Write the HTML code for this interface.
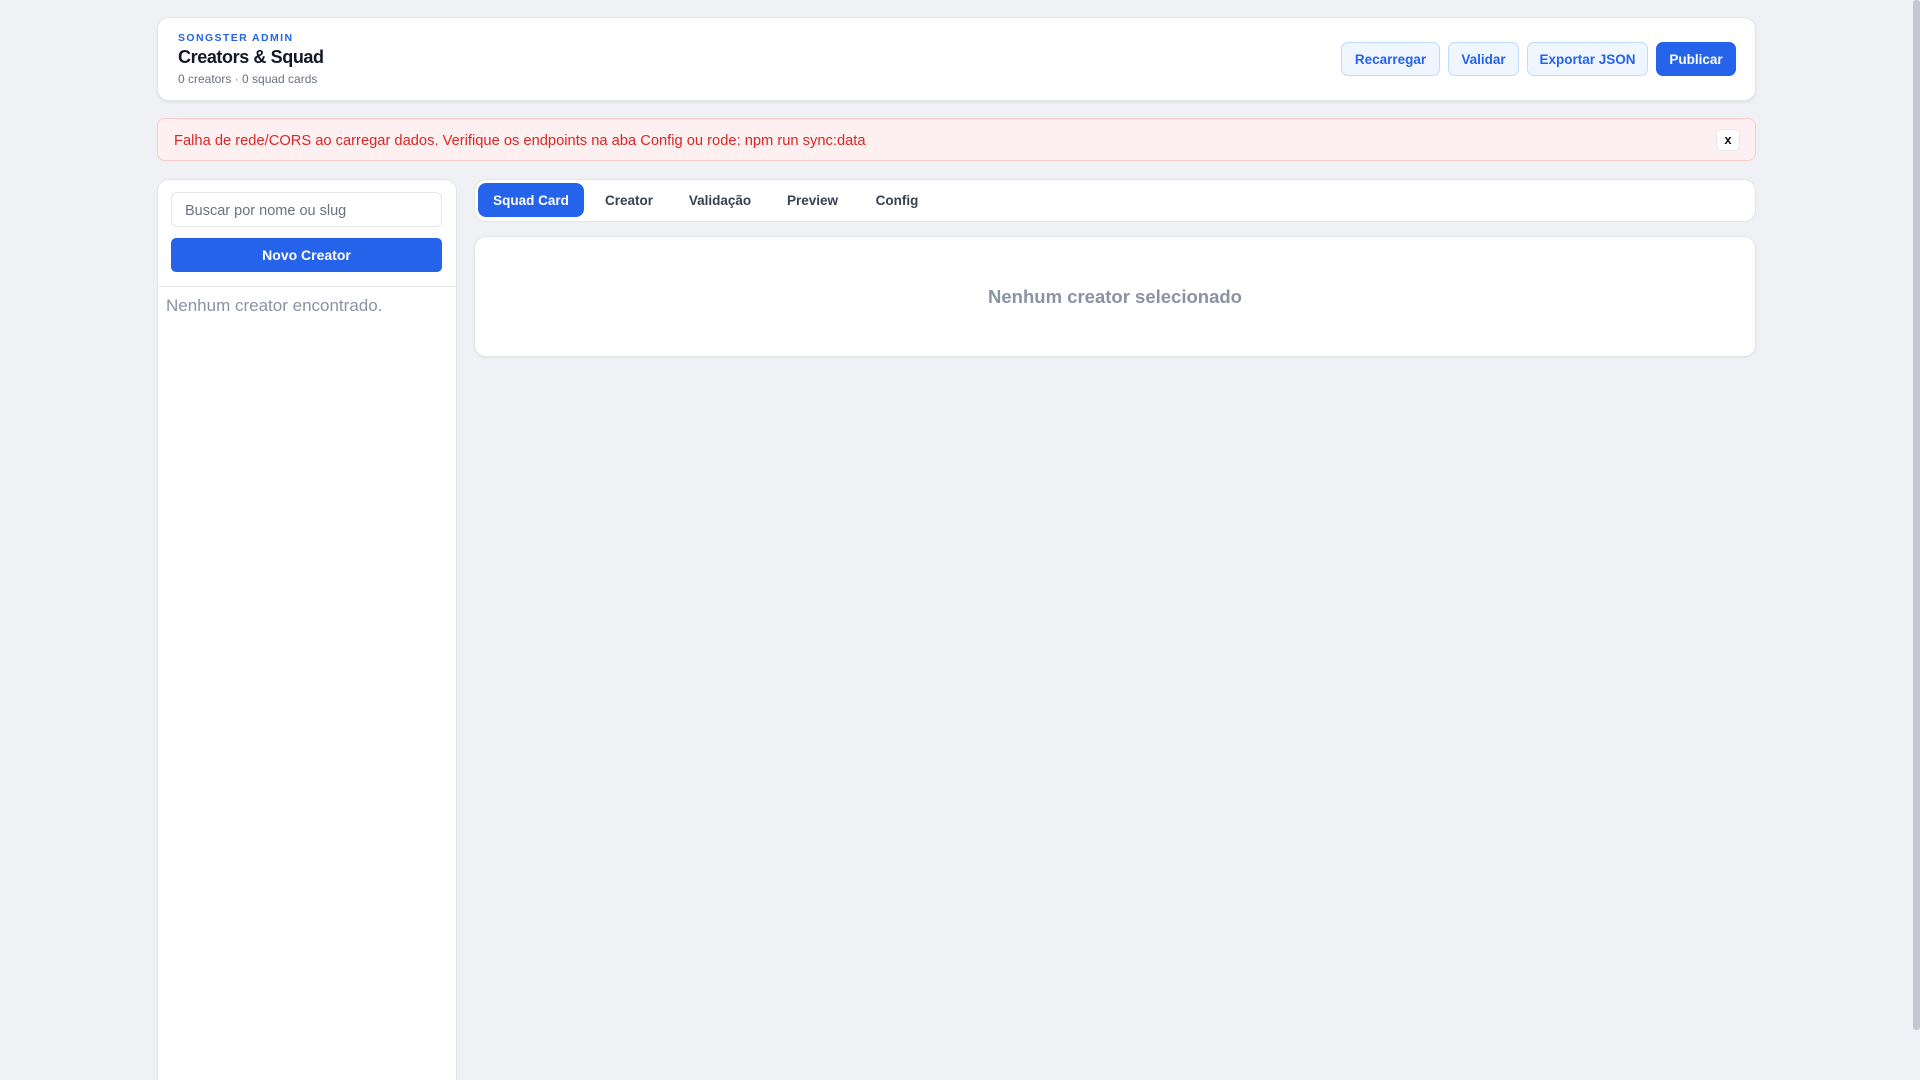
<!DOCTYPE html>
<html><head><meta charset="utf-8"><style>
*{box-sizing:border-box;margin:0;padding:0}
html,body{width:1920px;height:1080px;overflow:hidden}
body{background:#f0f1f4;font-family:"Liberation Sans",sans-serif}
#w{position:relative;width:1920px;height:1080px;overflow:hidden}
.card{position:absolute;background:#fff;border:1px solid #e3e5ea;border-radius:12px}
.abs{position:absolute}
.btn{position:absolute;top:42px;height:34px;border:1px solid #bfdbfe;background:#eff6ff;color:#2563eb;border-radius:7px;font-size:13.5px;font-weight:bold;display:flex;align-items:center;justify-content:center}
.tab{position:absolute;top:183px;height:34px;font-size:13.5px;font-weight:bold;color:#374151;display:flex;align-items:center;justify-content:center}
</style></head><body><div id="w">
<div class="card" style="left:157px;top:17px;width:1599px;height:84px;box-shadow:0 2px 2px rgba(0,0,0,.06)">
<div class="abs" style="left:20px;top:14px;font-size:10.5px;font-weight:bold;letter-spacing:1.4px;color:#2563eb">SONGSTER ADMIN</div>
<div class="abs" style="left:20px;top:29px;font-size:18px;font-weight:bold;color:#111827;letter-spacing:-0.4px">Creators &amp; Squad</div>
<div class="abs" style="left:20px;top:54px;font-size:12px;color:#6b7280">0 creators · 0 squad cards</div>
</div>
<div class="btn" style="left:1341px;width:99px">Recarregar</div>
<div class="btn" style="left:1448px;width:71px">Validar</div>
<div class="btn" style="left:1527px;width:121px">Exportar JSON</div>
<div class="btn" style="left:1656px;width:80px;background:#2563eb;border-color:#2563eb;color:#fff">Publicar</div>
<div class="abs" style="left:157px;top:118px;width:1599px;height:43px;background:#fef0f0;border:1px solid #fbcaca;border-radius:8px"></div>
<div class="abs" style="left:174px;top:133px;font-size:14.7px;color:#dc2626">Falha de rede/CORS ao carregar dados. Verifique os endpoints na aba Config ou rode: npm run sync:data</div>
<div class="abs" style="left:1716px;top:129px;width:24px;height:22px;background:#fff;border:1px solid #e5e7eb;border-radius:5px;font-size:13px;font-weight:bold;color:#111;text-align:center;line-height:19px">x</div>
<div class="card" style="left:157px;top:179px;width:300px;height:920px"></div>
<div class="abs" style="left:171px;top:192px;width:271px;height:35px;border:1px solid #e5e7eb;border-radius:6px;font-size:14.5px;color:#6b7280;padding:10px 13px 0">Buscar por nome ou slug</div>
<div class="abs" style="left:171px;top:238px;width:271px;height:34px;background:#2563eb;border-radius:5px;color:#fff;font-size:14px;font-weight:bold;text-align:center;line-height:34px">Novo Creator</div>
<div class="abs" style="left:158px;top:286px;width:298px;height:1px;background:#e5e7eb"></div>
<div class="abs" style="left:166px;top:296px;font-size:17px;color:#8a93a3">Nenhum creator encontrado.</div>
<div class="card" style="left:474px;top:179px;width:1282px;height:43px"></div>
<div class="tab" style="left:478px;width:106px;background:#2563eb;color:#fff;border-radius:8px">Squad Card</div>
<div class="tab" style="left:596px;width:66px">Creator</div>
<div class="tab" style="left:683px;width:74px">Validação</div>
<div class="tab" style="left:780px;width:65px">Preview</div>
<div class="tab" style="left:869px;width:56px">Config</div>
<div class="card" style="left:474px;top:236px;width:1282px;height:121px;box-shadow:0 1px 2px rgba(0,0,0,.05)"></div>
<div class="abs" style="left:474px;top:286px;width:1282px;text-align:center;font-size:18.5px;font-weight:bold;color:#8a93a3">Nenhum creator selecionado</div>
<div class="abs" style="left:1913px;top:0;width:7px;height:1030px;background:#c5c8d0;border-radius:3px"></div>
</div></body></html>
